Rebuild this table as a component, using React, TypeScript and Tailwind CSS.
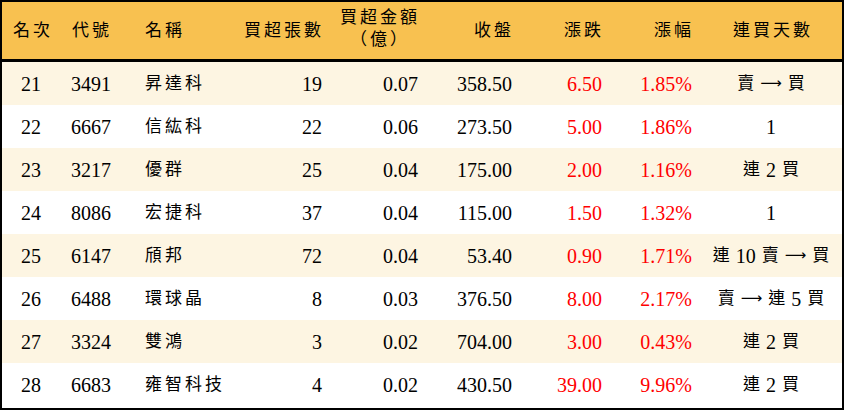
import React from "react";

type Row = {
  rank: number;
  code: string;
  name: string;
  lots: number;
  amount: string;
  close: string;
  change: string;
  pct: string;
  streak: string;
};

const rows: Row[] = [
  { rank: 21, code: "3491", name: "昇達科", lots: 19, amount: "0.07", close: "358.50", change: "6.50", pct: "1.85%", streak: "賣 → 買" },
  { rank: 22, code: "6667", name: "信紘科", lots: 22, amount: "0.06", close: "273.50", change: "5.00", pct: "1.86%", streak: "1" },
  { rank: 23, code: "3217", name: "優群", lots: 25, amount: "0.04", close: "175.00", change: "2.00", pct: "1.16%", streak: "連 2 買" },
  { rank: 24, code: "8086", name: "宏捷科", lots: 37, amount: "0.04", close: "115.00", change: "1.50", pct: "1.32%", streak: "1" },
  { rank: 25, code: "6147", name: "頎邦", lots: 72, amount: "0.04", close: "53.40", change: "0.90", pct: "1.71%", streak: "連 10 賣 → 買" },
  { rank: 26, code: "6488", name: "環球晶", lots: 8, amount: "0.03", close: "376.50", change: "8.00", pct: "2.17%", streak: "賣 → 連 5 買" },
  { rank: 27, code: "3324", name: "雙鴻", lots: 3, amount: "0.02", close: "704.00", change: "3.00", pct: "0.43%", streak: "連 2 買" },
  { rank: 28, code: "6683", name: "雍智科技", lots: 4, amount: "0.02", close: "430.50", change: "39.00", pct: "9.96%", streak: "連 2 買" },
];

const cols = "grid grid-cols-[58px_75px_105px_90px_96px_94px_90px_90px_1fr]";
const font = { fontFamily: '"Liberation Serif", "Noto Sans CJK TC", serif' };

// 連買天數: numbers in serif, arrow long, chinese a bit smaller
function Streak({ text }: { text: string }) {
  return (
    <div className="flex justify-center items-center gap-[6px]">
      {text.split(" ").map((t, i) => {
        if (t === "→")
          return (
            <span key={i} className="text-[15px]" style={{ fontFamily: '"DejaVu Sans", sans-serif' }}>
              ⟶
            </span>
          );
        if (/^\d+$/.test(t)) return <span key={i} className="text-[20px]">{t}</span>;
        return <span key={i} className="text-[17px]">{t}</span>;
      })}
    </div>
  );
}

export default function App() {
  return (
    <div className="w-[844px] h-[410px] bg-white" style={font}>
      <div className="h-full border-2 border-black flex flex-col text-black">
        {/* Header */}
        <div className={`${cols} h-[60px] bg-[#f8c150] border-b-[3px] border-black items-center text-[17px] tracking-[3px]`}>
          <div className="text-center pl-1">名次</div>
          <div className="pl-[12px]">代號</div>
          <div className="pl-[10px]">名稱</div>
          <div className="text-right pr-[6px]">買超張數</div>
          <div className="flex justify-end pr-[6px]">
            <div className="text-center leading-[22px] -mt-1">
              <div>買超金額</div>
              <div>（億）</div>
            </div>
          </div>
          <div className="text-right pr-[6px]">收盤</div>
          <div className="text-right pr-[6px]">漲跌</div>
          <div className="text-right pr-[6px]">漲幅</div>
          <div className="text-center pl-1">連買天數</div>
        </div>

        {/* Body */}
        {rows.map((r, i) => (
          <div
            key={r.rank}
            className={`${cols} h-[43px] items-center text-[20px] ${i % 2 === 0 ? "bg-[#fdf5e2]" : "bg-white"}`}
          >
            <div className="text-center">{r.rank}</div>
            <div className="pl-[11px]">{r.code}</div>
            <div className="pl-[10px] text-[17px] tracking-[3px]">{r.name}</div>
            <div className="text-right pr-[8px]">{r.lots}</div>
            <div className="text-right pr-[8px]">{r.amount}</div>
            <div className="text-right pr-[8px]">{r.close}</div>
            <div className="text-right pr-[8px] text-[#ff0000]">{r.change}</div>
            <div className="text-right pr-[8px] text-[#ff0000]">{r.pct}</div>
            <Streak text={r.streak} />
          </div>
        ))}
      </div>
    </div>
  );
}
